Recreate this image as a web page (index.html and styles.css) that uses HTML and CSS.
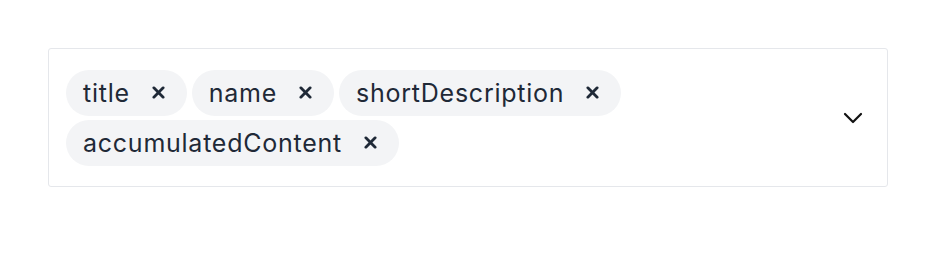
FILE: index.html
```html
<!DOCTYPE html>
<html>
<head>
<meta charset="utf-8">
<link rel="stylesheet" href="styles.css">
</head>
<body>
<div class="page">
  <div class="select">
    <div class="chips">
      <span class="chip"><span class="label">title</span><span class="remove"><svg viewBox="0 0 14 14" width="13" height="13"><path d="M2 2 L12 12 M12 2 L2 12" stroke="#1f2937" stroke-width="3" stroke-linecap="round" fill="none"/></svg></span></span>
      <span class="chip"><span class="label">name</span><span class="remove"><svg viewBox="0 0 14 14" width="13" height="13"><path d="M2 2 L12 12 M12 2 L2 12" stroke="#1f2937" stroke-width="3" stroke-linecap="round" fill="none"/></svg></span></span>
      <span class="chip"><span class="label">shortDescription</span><span class="remove"><svg viewBox="0 0 14 14" width="13" height="13"><path d="M2 2 L12 12 M12 2 L2 12" stroke="#1f2937" stroke-width="3" stroke-linecap="round" fill="none"/></svg></span></span>
      <span class="chip"><span class="label">accumulatedContent</span><span class="remove"><svg viewBox="0 0 14 14" width="13" height="13"><path d="M2 2 L12 12 M12 2 L2 12" stroke="#1f2937" stroke-width="3" stroke-linecap="round" fill="none"/></svg></span></span>
    </div>
    <div class="chevron">
      <svg viewBox="0 0 20 12" width="20" height="12"><path d="M2 2 L10 10 L18 2" stroke="#111" stroke-width="2.2" fill="none" stroke-linecap="round" stroke-linejoin="round"/></svg>
    </div>
  </div>
</div>
</body>
</html>
```
FILE: styles.css
```css
html, body {
  margin: 0;
  padding: 0;
  background: #ffffff;
}
body {
  font-family: Inter, "Noto Sans", sans-serif;
  color: #1f2937;
}
.page {
  padding: 48px 48px 0 48px;
}
.select {
  box-sizing: border-box;
  width: 840px;
  height: 139px;
  border: 1px solid #e5e7eb;
  border-radius: 3px;
  display: flex;
  align-items: center;
  padding: 0 24px 0 17px;
}
.chips {
  flex: 1;
  display: flex;
  flex-wrap: wrap;
  gap: 4px 5px;
}
.chip {
  display: inline-flex;
  align-items: center;
  height: 46px;
  box-sizing: border-box;
  padding: 0 22px 0 17px;
  background: #f3f4f6;
  border-radius: 23px;
  font-size: 25px;
  letter-spacing: 0.75px;
  line-height: 32px;
}
.remove {
  display: inline-flex;
  margin-left: 22px;
}
.chevron {
  display: flex;
  align-items: center;
  margin-left: auto;
}
```
